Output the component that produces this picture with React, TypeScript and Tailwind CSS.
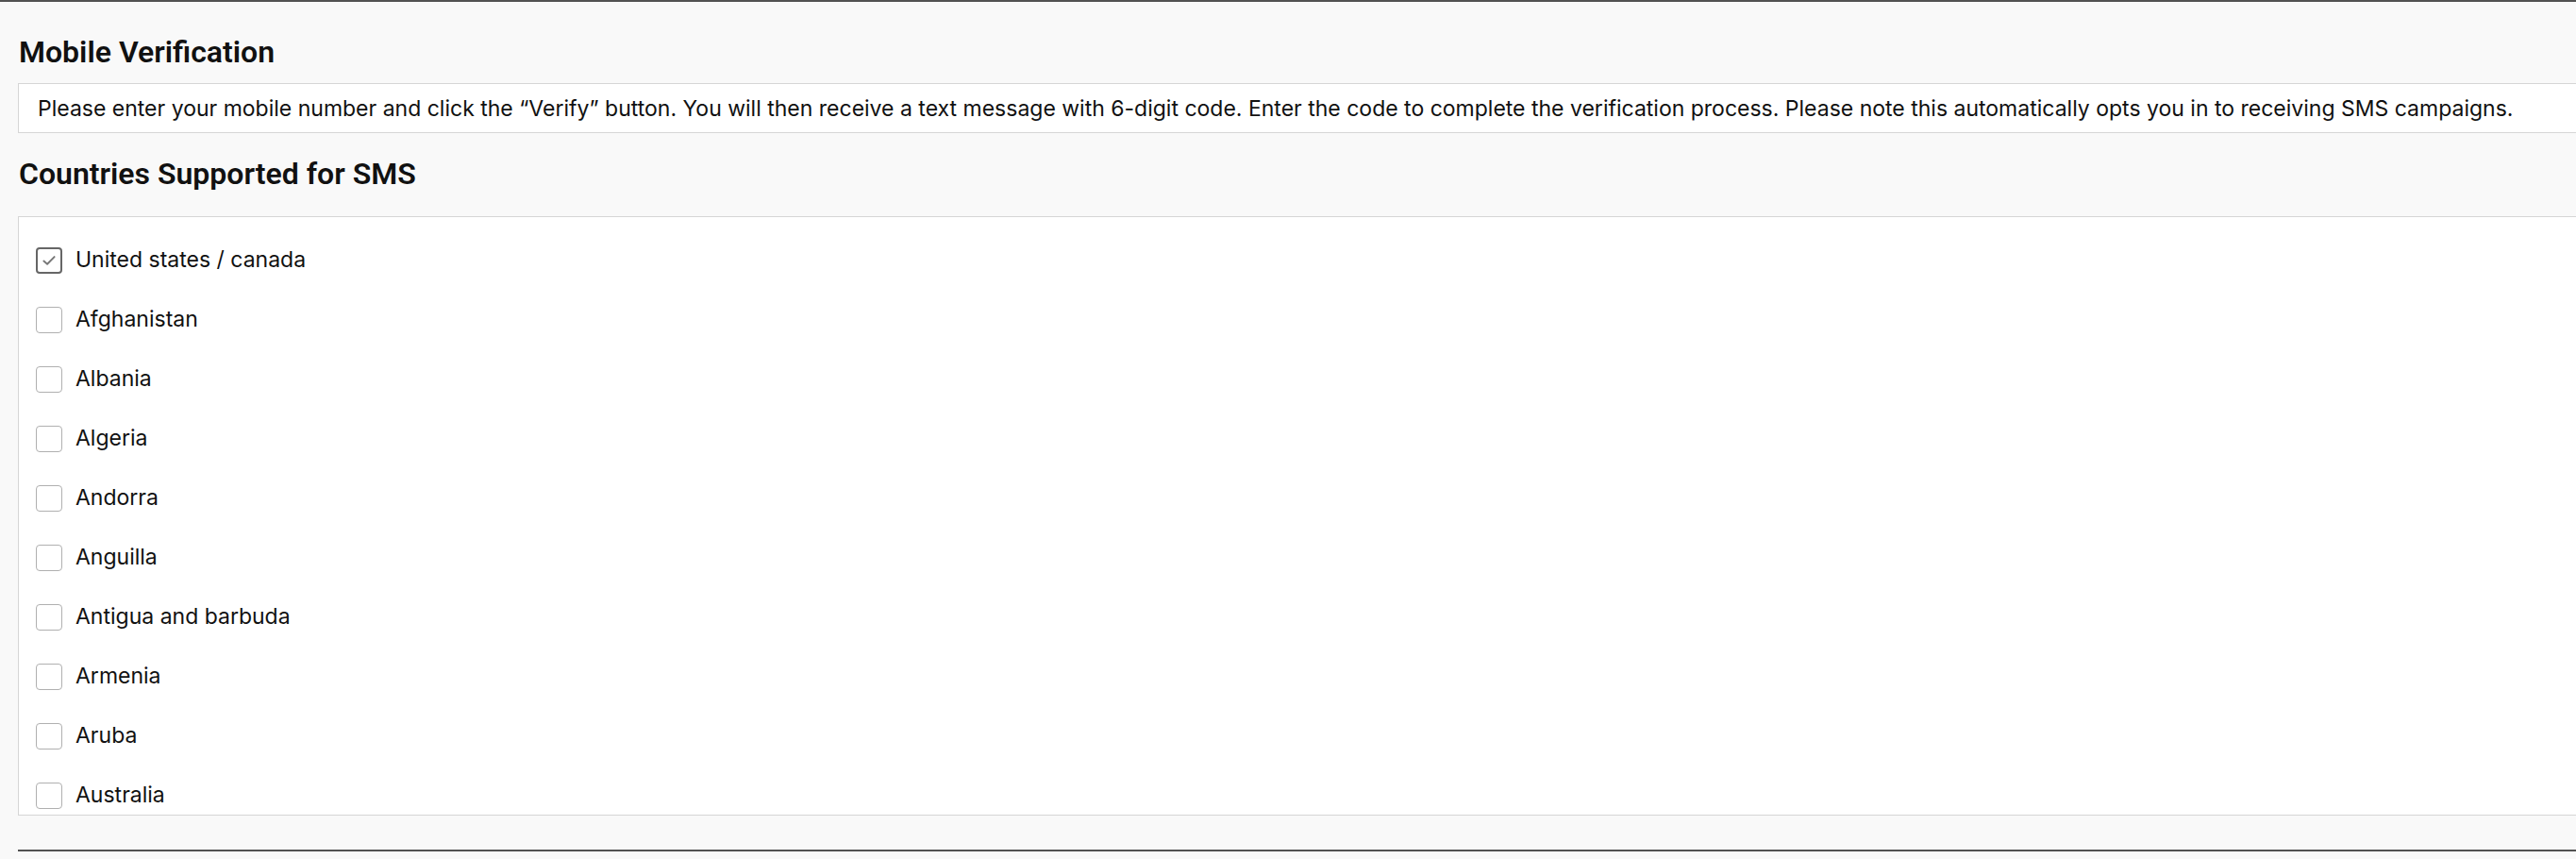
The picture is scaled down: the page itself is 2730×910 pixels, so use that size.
import React from "react";

const countries = [
  { name: "United states / canada", checked: true },
  { name: "Afghanistan", checked: false },
  { name: "Albania", checked: false },
  { name: "Algeria", checked: false },
  { name: "Andorra", checked: false },
  { name: "Anguilla", checked: false },
  { name: "Antigua and barbuda", checked: false },
  { name: "Armenia", checked: false },
  { name: "Aruba", checked: false },
  { name: "Australia", checked: false },
];

function Checkbox({ checked }: { checked: boolean }) {
  return (
    <span
      className={
        checked
          ? "w-[28px] h-[28px] shrink-0 rounded-[4px] border-[2px] border-[#666] bg-white flex items-center justify-center"
          : "w-[28px] h-[28px] shrink-0 rounded-[4px] border-[1.5px] border-[#b0b0b0] bg-white"
      }
    >
      {checked && (
        <svg width="18" height="18" viewBox="0 0 16 16" fill="none">
          <path d="M3 8.5 L6.3 11.3 L13 4.5" stroke="#777" strokeWidth="1.7" strokeLinecap="round" strokeLinejoin="round" />
        </svg>
      )}
    </span>
  );
}

export default function App() {
  return (
    <div className="min-h-screen w-full overflow-hidden bg-[#f9f9f9] text-black">
      {/* top rule */}
      <div className="h-[2px] bg-[#525252]"></div>

      <div className="pl-[19px]">
        <h2 className="mt-[34px] pl-[1px] text-[32px] leading-[38px] font-semibold font-['Roboto',sans-serif] text-[#111]">
          Mobile Verification
        </h2>

        <div className="mt-[14px] h-[53px] border border-r-0 border-[#d6d6d6] bg-white pl-[20px] pt-[12px] whitespace-nowrap overflow-hidden text-[23px] leading-[28px] font-['Inter',sans-serif] text-[#111]">
          Please enter your mobile number and click the “Verify” button. You will then receive a text message with 6-digit code. Enter the code to complete the verification process. Please note this automatically opts you in to receiving SMS campaigns.
        </div>

        <h2 className="mt-[24px] pl-[1px] text-[32px] leading-[38px] font-semibold font-['Roboto',sans-serif] text-[#111]">
          Countries Supported for SMS
        </h2>

        {/* country list */}
        <div className="mt-[26px] h-[635px] border border-r-0 border-[#d6d6d6] bg-white pt-[14px] pl-[18px] overflow-hidden">
          {countries.map((c) => (
            <label key={c.name} className="h-[63px] flex items-center gap-[14px] font-['Inter',sans-serif] text-[23px] text-[#111]">
              <Checkbox checked={c.checked} />
              <span>{c.name}</span>
            </label>
          ))}
        </div>
      </div>

      <div className="mt-[36px] ml-[19px] h-[2px] bg-[#525252]"></div>
    </div>
  );
}
